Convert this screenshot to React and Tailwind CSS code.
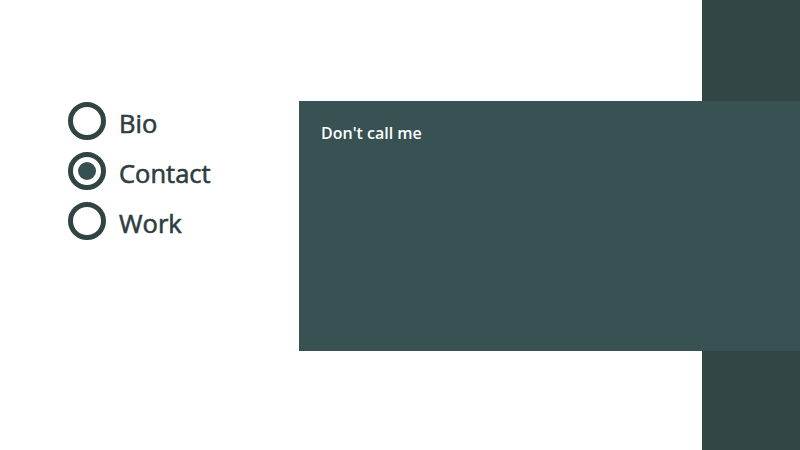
export default function App() {
  const items = [
    { label: "Bio", checked: false },
    { label: "Contact", checked: true },
    { label: "Work", checked: false },
  ];
  return (
    <div
      className="w-full h-[450px] flex pt-[101px] bg-[linear-gradient(to_right,#ffffff_702px,#334645_702px)]"
      style={{ fontFamily: '"Open Sans", sans-serif' }}
    >
      <div className="w-[299px] shrink-0 pl-[68px] pt-[1px] flex flex-col gap-[12px]">
        {items.map((it) => (
          <label key={it.label} className="flex items-center gap-[13px] h-[38px]">
            <span className="w-[38px] h-[38px] rounded-full border-[5px] border-[#2f4443] flex items-center justify-center bg-white">
              {it.checked && <span className="w-[18px] h-[18px] rounded-full bg-[#375152]" />}
            </span>
            <span className="text-[25.5px] font-normal text-[#2d3e41] leading-none pt-[5px] [-webkit-text-stroke:0.6px_#2d3e41]">{it.label}</span>
          </label>
        ))}
      </div>
      <div className="w-[501px] h-[250px] bg-[#385152] px-[22px] pt-[21px]">
        <p className="text-white text-[16px] font-semibold leading-[22px]">Don't call me</p>
      </div>
    </div>
  );
}
